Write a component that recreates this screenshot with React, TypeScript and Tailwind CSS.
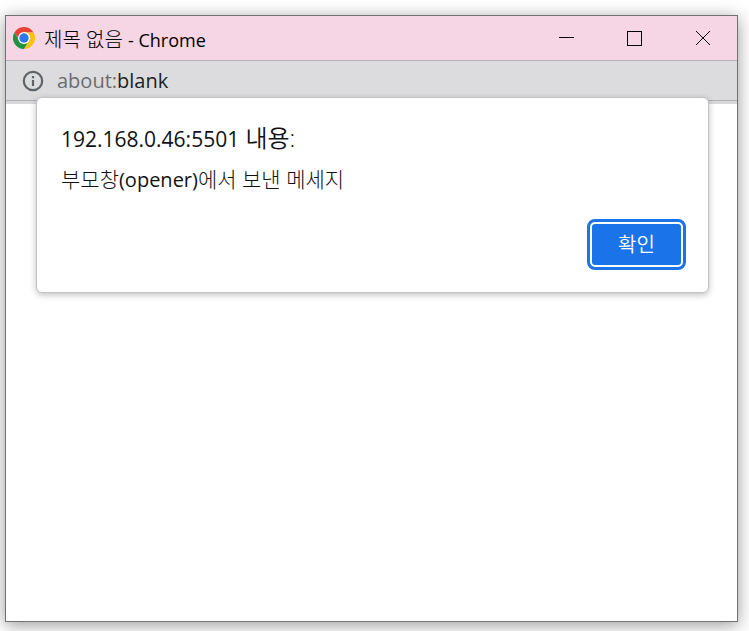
import type { ReactNode } from "react";

interface WindowButtonProps {
  label: string;
  children: ReactNode;
}

function WindowButton({ label, children }: WindowButtonProps) {
  return (
    <button type="button" aria-label={label} className="flex h-full w-[68px] items-center justify-center text-black">
      <svg width="16" height="16" viewBox="0 0 16 16" fill="none" stroke="currentColor" shapeRendering="crispEdges">
        {children}
      </svg>
    </button>
  );
}

function ChromeLogo() {
  return (
    <svg width="22" height="22" viewBox="0 0 48 48" aria-hidden="true">
      <path fill="#ea4335" d="M24 12 H44.8 A24 24 0 0 0 3.2 12 L13.6 30 A12 12 0 0 1 24 12 Z" />
      <path fill="#fbc116" d="M34.4 30 L24 48 A24 24 0 0 0 44.8 12 H24 A12 12 0 0 1 34.4 30 Z" />
      <path fill="#229342" d="M13.6 30 L3.2 12 A24 24 0 0 0 24 48 L34.4 30 A12 12 0 0 1 13.6 30 Z" />
      <circle cx="24" cy="24" r="13" fill="#fff" />
      <circle cx="24" cy="24" r="10.2" fill="#2a78ee" />
    </svg>
  );
}

function InfoIcon() {
  return (
    <svg width="22" height="22" viewBox="0 0 22 22" fill="none" aria-hidden="true">
      <circle cx="11" cy="11" r="9.2" stroke="#5f6368" strokeWidth="2.2" />
      <path d="M11 10v6M11 6v2.2" stroke="#5f6368" strokeWidth="2.2" />
    </svg>
  );
}

function TitleBar() {
  return (
    <header className="flex h-[45px] items-center border-b border-[#b3b1b5] bg-[#f6d5e4] pl-[7px]">
      <ChromeLogo />
      <h1 className="ml-[9px] flex-1 pt-1 text-[20px] leading-6 text-black">
        제목 없음 <span className="text-[18px] font-normal">- Chrome</span>
      </h1>
      <WindowButton label="최소화">
        <path d="M0 7.5h15" />
      </WindowButton>
      <WindowButton label="최대화">
        <path d="M0.5 1.5h14v14h-14z" />
      </WindowButton>
      <WindowButton label="닫기">
        <path d="M1 1l14 14M15 1L1 15" shapeRendering="auto" />
      </WindowButton>
    </header>
  );
}

function AddressBar() {
  return (
    <div className="flex h-10 items-center gap-[13px] border-b border-[#b0b1b3] bg-[#dcdcde] pl-4">
      <InfoIcon />
      <p className="text-[20px] leading-7 font-normal text-[#202124]">
        <span className="text-[#6a6c70]">about:</span>blank
      </p>
    </div>
  );
}

function AlertDialog() {
  return (
    <section
      role="alertdialog"
      aria-labelledby="alert-title"
      aria-describedby="alert-message"
      className="absolute right-7 left-[30px] top-[81px] rounded-md border border-[#c1c4c5] bg-white pt-[22px] pr-[22px] pb-[22px] pl-6 text-[#111214] shadow-[0_2px_6px_rgba(0,0,0,0.25)]"
    >
      <h2 id="alert-title" className="text-[24px] leading-9 font-[350]">
        <span className="text-[21px] font-normal">192.168.0.46:5501</span> 내용:
      </h2>
      <p id="alert-message" className="mt-2 text-[21px] leading-7">
        부모창<span className="text-[20px] font-normal">(opener)</span>에서 보낸 메세지
      </p>
      <div className="mt-[25px] flex justify-end">
        <button
          type="button"
          className="h-[51px] w-[99px] rounded-lg border-[3px] border-[#1a73e8] bg-white p-[2px] text-[20px] font-[350] text-white"
        >
          <span className="flex h-full items-center justify-center rounded-[3px] bg-[#1a73e8]">확인</span>
        </button>
      </div>
    </section>
  );
}

export default function App() {
  return (
    <div className="flex h-screen bg-white pt-[15px] pr-[11px] pb-[9px] pl-[5px] font-['Open_Sans','Noto_Sans_CJK_KR',sans-serif] font-light">
      <main className="relative flex flex-1 flex-col border border-[#707173] bg-white shadow-[0_3px_16px_rgba(0,0,0,0.4)]">
        <TitleBar />
        <AddressBar />
        <div className="h-[3px] bg-[#d8d8d8]" />
        <AlertDialog />
      </main>
    </div>
  );
}
